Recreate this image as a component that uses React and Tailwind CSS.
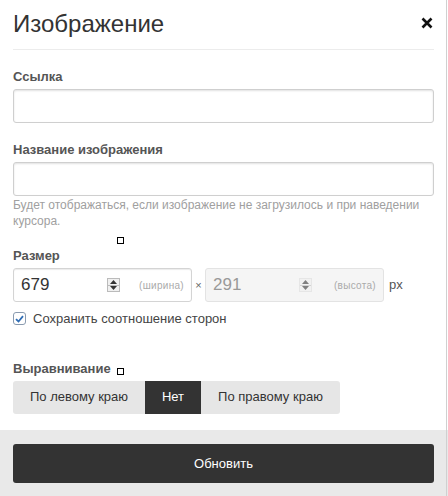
import React from "react"

const Label = ({ children, className = "" }) => (
    <div className={"text-[13px] leading-[18px] font-bold text-[#555] " + className}>{children}</div>
)

const Spinner = ({ disabled }) => (
    <div
        className={
            "flex flex-col w-[13px] h-[14px] border " +
            (disabled ? "border-[#ddd] opacity-60" : "border-[#bbb]")
        }
    >
        <div className="flex-1 flex items-center justify-center bg-[#f0f0f0] border-b border-[#bbb]">
            <svg width="7" height="4" viewBox="0 0 7 4">
                <path d="M0 4 L3.5 0 L7 4 Z" fill="#333" />
            </svg>
        </div>
        <div className="flex-1 flex items-center justify-center bg-[#f0f0f0]">
            <svg width="7" height="4" viewBox="0 0 7 4">
                <path d="M0 0 L3.5 4 L7 0 Z" fill="#333" />
            </svg>
        </div>
    </div>
)

const SizeInput = ({ value, hint, disabled }) => (
    <div
        className={
            "flex items-center w-[179px] h-[34px] rounded-[3px] border pl-[7px] pr-[7px] " +
            (disabled
                ? "bg-[#f5f5f5] border-[#e3e3e3] text-[#999]"
                : "bg-white border-[#d4d4d4] text-[#333] shadow-[inset_0_1px_1px_rgba(0,0,0,0.08)]")
        }
    >
        <span className="text-[17px] w-[86px]">{value}</span>
        <Spinner disabled={disabled} />
        <span className="ml-auto text-[10px] text-[#aaa] tracking-[0.3px]">{hint}</span>
    </div>
)

const TextInput = () => (
    <div className="h-[34px] w-full rounded-[3px] border border-[#cfcfcf] bg-white shadow-[inset_0_1px_2px_rgba(0,0,0,0.12)]" />
)

const App = () => {
    return (
        <div
            className="relative w-[448px] h-[496px] bg-white flex flex-col"
            style={{ fontFamily: '"Liberation Sans", Arial, sans-serif' }}
        >
            <div className="absolute right-[1px] top-0 bottom-0 w-px bg-[#d0d0d0]" />

            <div className="flex-1 pl-[13px] pr-[14px]">
                <div className="h-[50px] flex items-center justify-between border-b border-[#ececec]">
                    <h1 className="text-[24px] font-normal text-[#333] mt-[-2px]">Изображение</h1>
                    <svg width="12" height="12" viewBox="0 0 12 12" className="mr-[1px] mt-[-4px]">
                        <path d="M1.5 1.5 L10.5 10.5 M10.5 1.5 L1.5 10.5" stroke="#111" strokeWidth="2.6" />
                    </svg>
                </div>

                <Label className="mt-[18px]">Ссылка</Label>
                <div className="mt-[3px]">
                    <TextInput />
                </div>

                <Label className="mt-[18px]">Название изображения</Label>
                <div className="mt-[3px]">
                    <TextInput />
                </div>
                <p className="mt-[1px] text-[12px] leading-[16px] text-[#a0a0a0]">
                    Будет отображаться, если изображение не загрузилось и при наведении курсора.
                </p>

                <Label className="mt-[18px]">Размер</Label>
                <div className="mt-[3px] flex items-center">
                    <SizeInput value="679" hint="(ширина)" />
                    <span className="w-[13px] text-center text-[11px] text-[#666]">×</span>
                    <SizeInput value="291" hint="(высота)" disabled />
                    <span className="ml-[5px] text-[13px] text-[#555]">px</span>
                </div>

                <label className="mt-[7px] flex items-center gap-[7px]">
                    <span className="w-[13px] h-[13px] rounded-[3px] border border-[#8a9bb0] bg-white flex items-center justify-center">
                        <svg width="9" height="8" viewBox="0 0 9 8">
                            <path d="M1 4.2 L3.5 6.5 L8 1.2" stroke="#2f6db5" strokeWidth="1.8" fill="none" />
                        </svg>
                    </span>
                    <span className="text-[13px] text-[#444]">Сохранить соотношение сторон</span>
                </label>

                <Label className="mt-[31px]">Выравнивание</Label>
                <div className="mt-[3px] flex h-[33px] w-[327px] text-[13px]">
                    <button className="w-[132px] bg-[#e6e6e6] text-[#333] rounded-l-[3px]">По левому краю</button>
                    <button className="w-[56px] bg-[#333] text-white">Нет</button>
                    <button className="w-[139px] bg-[#e6e6e6] text-[#333] rounded-r-[3px]">По правому краю</button>
                </div>
            </div>

            <div className="h-[66px] bg-[#e9e9e9] pl-[13px] pr-[14px] pt-[14px]">
                <button className="w-full h-[39px] rounded-[3px] bg-[#333] text-white text-[13px]">Обновить</button>
            </div>

            <div className="absolute left-[117px] top-[237px] w-[7px] h-[7px] border-[1.5px] border-black bg-white" />
            <div className="absolute left-[117px] top-[368px] w-[7px] h-[7px] border-[1.5px] border-black bg-white" />
        </div>
    )
}

export default App
